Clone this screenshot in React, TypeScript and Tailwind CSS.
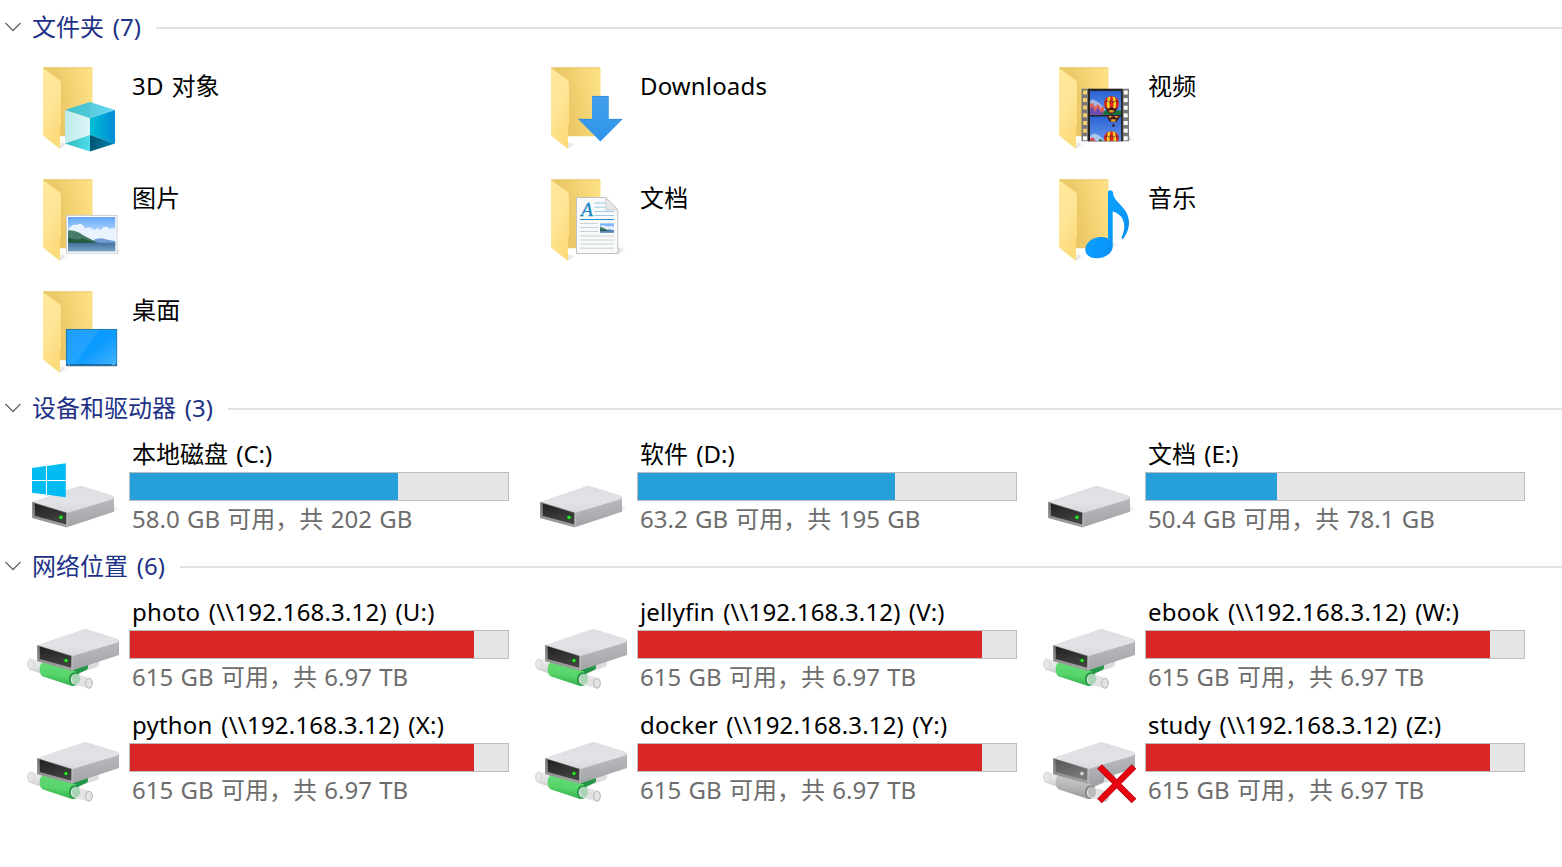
import type { ReactNode } from 'react';

type Drive = { name: string; track: string; info: string; used: number; icon: ReactNode };

function Defs() {
  return (
    <svg className="absolute h-0 w-0" aria-hidden="true">
      <defs>
        <linearGradient id="folderBack" x1="0" y1="0.6" x2="1" y2="0.3">
          <stop offset="0.3" stopColor="#ebc765" />
          <stop offset="1" stopColor="#fde084" />
        </linearGradient>
        <linearGradient id="folderFront" x1="0" y1="0" x2="0.4" y2="1">
          <stop offset="0" stopColor="#ffe89c" />
          <stop offset="0.5" stopColor="#fee598" />
          <stop offset="1" stopColor="#fedb7c" />
        </linearGradient>
        <linearGradient id="shade">
          <stop offset="0" stopColor="#9a9a9a" stopOpacity="0.35" />
          <stop offset="1" stopColor="#bbb" stopOpacity="0" />
        </linearGradient>
        <linearGradient id="cubeTop"><stop stopColor="#45c6ca" /><stop offset="1" stopColor="#6bd5f5" /></linearGradient>
        <linearGradient id="cubeLeft"><stop stopColor="#bdebea" /><stop offset="1" stopColor="#dcf5fa" /></linearGradient>
        <linearGradient id="cubeRight"><stop stopColor="#00bed6" /><stop offset="1" stopColor="#008bd6" /></linearGradient>
        <linearGradient id="cubeFloor"><stop stopColor="#2cb9b7" /><stop offset="1" stopColor="#4fdded" /></linearGradient>
        <linearGradient id="cubeDark"><stop stopColor="#00566f" /><stop offset="1" stopColor="#0082b6" /></linearGradient>
        <linearGradient id="arrow" x2="0" y2="1"><stop stopColor="#42a0ec" /><stop offset="1" stopColor="#2f93e8" /></linearGradient>
        <linearGradient id="sky" x2="0" y2="1"><stop stopColor="#65a5fa" /><stop offset="0.7" stopColor="#e4f3ff" /></linearGradient>
        <linearGradient id="lake" x2="0" y2="1"><stop stopColor="#3e6f9c" /><stop offset="1" stopColor="#7fa9c8" /></linearGradient>
        <linearGradient id="videoSky" x2="0" y2="1"><stop stopColor="#2b62d2" /><stop offset="1" stopColor="#6497ee" /></linearGradient>
        <linearGradient id="note" x2="1" y2="1"><stop stopColor="#0ea4ff" /><stop offset="0.6" stopColor="#0a99fb" /><stop offset="1" stopColor="#0784e3" /></linearGradient>
        <linearGradient id="screen" x2="1" y2="1"><stop stopColor="#0795fc" /><stop offset="0.55" stopColor="#0c9bff" /><stop offset="1" stopColor="#46b4ff" /></linearGradient>
        <linearGradient id="driveSide" x2="0.25" y2="1"><stop offset="0.2" stopColor="#d9dadd" /><stop offset="0.5" stopColor="#b9babd" /><stop offset="1" stopColor="#a5a6a9" /></linearGradient>
        <linearGradient id="driveTop" x2="0" y2="1"><stop stopColor="#dedfe2" /><stop offset="0.6" stopColor="#e2e3e6" /><stop offset="1" stopColor="#d8d9dc" /></linearGradient>
        <linearGradient id="driveSlot" x2="0.3" y2="1"><stop stopColor="#202020" /><stop offset="1" stopColor="#424242" /></linearGradient>
        <linearGradient id="slotOff" x2="0.3" y2="1"><stop stopColor="#565656" /><stop offset="1" stopColor="#7a7a7a" /></linearGradient>
        <linearGradient id="driveRim" x2="0" y2="1"><stop stopColor="#6f6f6f" /><stop offset="1" stopColor="#a9a9a9" /></linearGradient>
        <linearGradient id="pipe" x1="0.6" x2="0.4" y2="1"><stop stopColor="#67dc79" /><stop offset="0.55" stopColor="#56d469" /><stop offset="1" stopColor="#2fa748" /></linearGradient>
        <linearGradient id="pipeOff" x1="0.6" x2="0.4" y2="1"><stop stopColor="#c9c9cb" /><stop offset="0.5" stopColor="#b7b7b9" /><stop offset="1" stopColor="#919193" /></linearGradient>
        <linearGradient id="tube" x1="0.6" x2="0.4" y2="1"><stop stopColor="#eeeeee" /><stop offset="0.6" stopColor="#e0e0e0" /><stop offset="1" stopColor="#c8c8c8" /></linearGradient>
      </defs>
    </svg>
  );
}

function Folder({ children }: { children: ReactNode }) {
  return (
    <svg className="h-[112px] w-[108px] shrink-0" viewBox="21 56 108 112">
      <path d="M60 148.5 68 144.5 61 142Z" fill="url(#shade)" />
      <path d="M43 67.3H92.5V136.2H60Z" fill="url(#folderBack)" />
      <path d="M43 67.8H92.3" stroke="#e8cb76" strokeWidth="0.8" />
      <path d="M43 68 58.5 79.2Q61 81 61 83V124.5L60 127V149L43 135.5Z" fill="url(#folderFront)" />
      {children}
    </svg>
  );
}

function ObjectsIcon() {
  return (
    <Folder>
      <path d="M90 151 121 141 115 139Z" fill="url(#shade)" />
      <path d="M90 102 115 110 90 118.3 65 110Z" fill="url(#cubeTop)" />
      <path d="M90 102V118.3L65 110Z" fill="#35b9c6" opacity="0.25" />
      <path d="M65 110 90 118.3V135L65 143.4Z" fill="url(#cubeLeft)" />
      <path d="M115 110 90 118.3V135L115 143.4Z" fill="url(#cubeRight)" />
      <path d="M65 143.4 90 135V151.4Z" fill="url(#cubeFloor)" />
      <path d="M115 143.4 90 135V151.4Z" fill="url(#cubeDark)" />
    </Folder>
  );
}

function DownloadsIcon() {
  return (
    <Folder>
      <path d="M84 96H100.8V119H114.8L92.4 141.4 70 119H84Z" fill="url(#arrow)" />
      <path d="M84 96.4H100.8M70.5 119.3H84M101 119.3H114" stroke="#2f86d2" strokeWidth="0.7" />
    </Folder>
  );
}

function Balloon({ x, y }: { x: number; y: number }) {
  return (
    <g transform={`translate(${x} ${y}) scale(0.93)`}>
      <path d="M-8 0C-8-10.5 8-10.5 8 0 8 4 4.5 7 3 10H-3C-4.5 7-8 4-8 0Z" fill="#d9281c" />
      <path d="M-3.5-7C-5.5-3-5.5 3-3 9H-1C-2.5 3-2.5-3-1-7.5ZM3.5-7C5.5-3 5.5 3 3 9H1C2.500 3 2.5-3 1-7.5Z" fill="#f3d424" />
      <path d="M-7.5 3-4 5.5 0 4 4 5.5 7.5 3 5 7.500 3 10H-3L-5 7.5Z" fill="#3b1420" />
      <path d="M-3.5 6.5-2 7.5 0 6.500 2 7.5 3.5 6.5 2 9.500H-2Z" fill="#d8a522" />
      <path d="M-7.500-1.500-4-3-2-1 0-3 2-1 4-3 7.500-1.500" stroke="#4a1820" strokeWidth="0.8" fill="none" />
    </g>
  );
}

function VideoIcon() {
  const holes = [0, 1, 2, 3, 4, 5, 6];
  return (
    <Folder>
      <path d="M113 141.3 118 139 113 136Z" fill="url(#shade)" />
      <path
        fillRule="evenodd"
        d="M65.5 88.8H113V141.3H65.5ZM67 90.5V94.5H71V90.5ZM67 98V102H71V98ZM67 105.6V109.6H71V105.6ZM67 113.3V117.3H71V113.3ZM67 121V125H71V121ZM67 128.7V132.7H71V128.7ZM67 136.2V140.2H71V136.2Z"
        fill="#777"
      />
      {holes.map((n) => (
        <rect key={n} x="107.7" y={90.5 + n * 7.63} width="4" height="4" fill="#fff" />
      ))}
      <rect x="72" y="88.8" width="34.7" height="52.5" fill="#252525" />
      <svg x="74" y="91" width="31" height="23.7" viewBox="0 0 31 23.7">
        <rect width="31" height="24" fill="url(#videoSky)" />
        <path d="M0 10Q3 7 6 10 9 11 13 16L16 19H0Z" fill="#a9b6e6" />
        <path d="M0 13 3 12 5 16 8 13 11 17 14 15V24H0Z" fill="#e0655a" />
        <path d="M0 19 2 15 5 21 8 16 11 22 13 19V24H0Z" fill="#6b4cb4" />
        <path d="M15 19.5H31V24H12Z" fill="#137238" />
        <Balloon x={21.5} y={12.6} />
        <path d="M20.300 23.7V22H22.7V23.700Z" fill="#321" />
      </svg>
      <svg x="74" y="116.3" width="31" height="24.7" viewBox="0 0 31 24.7">
        <rect width="31" height="25" fill="url(#videoSky)" />
        <Balloon x={23.3} y={-3.5} />
        <path d="M22.200 8H24.700V10.500H22.200Z" fill="#402525" />
        <path d="M0 20Q3 16 6 18 9 18 14 24V25H0Z" fill="#aec7ee" />
        <path d="M0 22.5 3 21 6 25H0Z" fill="#d94c55" />
        <path d="M8 25 10 22.500 14 25Z" fill="#177b40" />
        <Balloon x={21.5} y={22.3} />
      </svg>
    </Folder>
  );
}

function Landscape() {
  return (
    <>
      <rect width="47" height="34" fill="url(#sky)" />
      <path d="M0 13Q4 6 9 8 13 4 17 11 23 9 26 13 29 9 32 13 37 7 41 12 44 9 47 12V25H0Z" fill="#e9f3ff" />
      <path d="M23 24Q30 19 37 22L47 24V28H20Z" fill="#6d9ad0" />
      <path d="M0 13Q9 13 15 18L31 26V28H0Z" fill="#487d6a" />
      <path d="M0 20Q8 24 14 21 24 24 33 27H0Z" fill="#255a40" />
      <rect y="25.5" width="47" height="9" fill="url(#lake)" />
    </>
  );
}

function PicturesIcon() {
  return (
    <Folder>
      <path d="M117 142 121 138 117 137Z" fill="url(#shade)" />
      <rect x="66.5" y="103.5" width="50.5" height="37.8" fill="#fff" stroke="#cfd1d3" />
      <svg x="68" y="105" width="47.5" height="34.5" viewBox="0 0 47 34" preserveAspectRatio="none"><Landscape /></svg>
    </Folder>
  );
}

function DocumentsIcon() {
  return (
    <Folder>
      <path d="M110 142 119 137.5 110 135Z" fill="url(#shade)" />
      <path d="M68.5 85.5H97.8L109.8 97.8V141.5H68.5Z" fill="#f8f9fa" stroke="#bfc3c5" />
      <path d="M97.8 85.5V97.8H109.8Z" fill="#e6e7e9" stroke="#c0c3c5" strokeWidth="0.8" />
      <path d="M86.5 91H97M86.5 95.2H97M86.5 99.5H106M86.5 103.5H106" stroke="#9ccbe5" />
      <path d="M72 107.5H106" stroke="#278fcf" />
      <path d="M72 111.5H90M72 115.5H90M72 119.5H90M72 124H106M72 128H106M72 132H106M72 136.2H106" stroke="#ccd0d2" />
      <text x="73" y="103.7" fontFamily="Liberation Serif, serif" fontSize="19.5" fontStyle="italic" fill="#1987c7" stroke="#1987c7" strokeWidth="0.3">A</text>
      <svg x="92" y="111.3" width="14" height="9.7" viewBox="0 0 47 34" preserveAspectRatio="none"><Landscape /></svg>
    </Folder>
  );
}

function MusicIcon() {
  return (
    <Folder>
      <path d="M93 137 104 132.5 96 130Z" fill="url(#shade)" />
      <path
        d="M92 80.5C92 77.5 96.5 77.5 97 80.5 97.5 91 113 95 113 110.5 113 117 110.5 122 107.5 126.5 106.5 127.5 105 126.5 105.7 125.2 112 111 106 102 96.7 99.5V134C96.7 142 88 146.3 81 146.3 73.5 146.3 69.3 142.5 69.3 137.5 69.3 129.5 79 123.5 88 125.2 90 125.5 91.2 125.9 92 126.3Z"
        fill="url(#note)"
      />
    </Folder>
  );
}

function DesktopIcon() {
  return (
    <Folder>
      <path d="M66 142H118L115 143H70Z" fill="#ddd" />
      <rect x="66.4" y="105.4" width="50.3" height="36" fill="url(#screen)" />
      <path d="M66.5 105.5H100L75 140H66.5Z" fill="#fff" opacity="0.09" />
      <rect x="66.4" y="105.4" width="50.3" height="36" fill="none" stroke="#1773ad" strokeWidth="0.9" />
      <path d="M66 140.8H117" stroke="#155b8d" strokeWidth="1.3" />
      <path d="M68 140.7H70M112 140.7H115" stroke="#8dcdf4" strokeWidth="0.7" />
    </Folder>
  );
}

function DriveBox({ off = false }: { off?: boolean }) {
  return (
    <>
      <path d="M32.3 502 78 486.5Q80.3 485.7 83 486.5L111.5 495.5Q114 496.3 114 499V511.7L67 527.3Z" fill="url(#driveSide)" />
      <path d="M32.3 502 78 486.5Q80.3 485.7 83 486.5L111.5 495.5Q113.5 496.3 113.5 497.5 113 499 110 500L67 513Z" fill="url(#driveTop)" />
      <path d="M32.3 502 67 512.5V527.3L32.3 517.7Z" fill="url(#driveRim)" />
      <path d="M34.8 503.4 66.3 513V524.5L34.8 515.7Z" fill={off ? 'url(#slotOff)' : 'url(#driveSlot)'} />
      <path d="M32.6 502.2V517.7L67 527" fill="none" stroke="#8b8b8b" strokeWidth="0.7" />
      <path d="M67 513V527" stroke="#d0d0d2" strokeWidth="0.7" />
      <circle cx="61" cy="517.3" r="2.2" fill={off ? '#939393' : '#126a13'} />
      <circle cx="61" cy="517.3" r="1.6" fill={off ? '#dedede' : '#31ef32'} />
    </>
  );
}

function LocalIcon({ system = false }: { system?: boolean }) {
  return (
    <svg className="h-[113px] w-[108px] shrink-0" viewBox="21 426 108 113">
      <path d="M112 512 120 508.5 113 506Z" fill="url(#shade)" />
      <DriveBox />
      {system && (
        <path d="M32 468 45.9 466.1V479.9H32ZM46.9 465.9 65.8 463.3V479.9H46.9ZM32 480.9H45.9V494.6L32 492.8ZM46.9 480.9H65.8V497.2L46.9 494.7Z" fill="#00bcf2" />
      )}
    </svg>
  );
}

function NetworkIcon({ off = false }: { off?: boolean }) {
  return (
    <svg className="h-[113px] w-[108px] shrink-0" viewBox="21 584 108 113">
      <path d="M82 672 96 667.5Q99 666.5 99 663.5V659L80 665Z" fill="#dcdcdc" />
      <path d="M68 672 85 665 88 664V667Q88 669.5 85 670.5L72 677Z" fill={off ? '#a1a1a3' : '#239548'} />
      <path d="M32 658.7 45 662 42 674 30 669.8C26 667 27 659 32 658.7Z" fill="url(#tube)" />
      <ellipse cx="30.8" cy="664" rx="3.2" ry="5" fill="#e7e7e7" stroke="#d0d0d0" strokeWidth="0.8" />
      <path d="M43 662.5 76 671.5 76 684.5Q73 687 69 685L43 676.5C38 674 39 663 43 662.5Z" fill={off ? 'url(#pipeOff)' : 'url(#pipe)'} />
      <ellipse cx="74.5" cy="679" rx="5.6" ry="6.8" fill={off ? '#858587' : '#259a4a'} />
      <path d="M76 674 90 678C94 680 93 688 88 688.3L74 684.5Q70 683 71 678 72 674 76 674Z" fill="#e2e2e2" />
      <ellipse cx="76" cy="679" rx="4" ry="5.2" fill={off ? '#b9b9b9' : '#a9d4b5'} />
      <ellipse cx="89" cy="683.3" rx="3.3" ry="4.8" fill="#e5e5e5" stroke="#b8b8b8" strokeWidth="1.1" />
      <g transform="translate(5 143.2)"><DriveBox off={off} /></g>
      {off && <path d="M83.5 653.5 118 688M118 653.5 83.5 688" stroke="#b70009" strokeWidth="6.5" />}
      {off && <path d="M84 654 117.5 687.5M117.5 654 84 687.5" stroke="#e70410" strokeWidth="5.3" />}
    </svg>
  );
}

function GroupHeader({ title, className }: { title: string; className: string }) {
  return (
    <div className={`flex items-center pl-[5px] text-[#1e3287] ${className}`}>
      <svg className="mr-[11px] mb-[2px] h-[10px] w-[16px]" viewBox="0 0 16 10">
        <path d="M0.5 1 8 8.5 15.5 1" fill="none" stroke="#666" strokeWidth="1.3" />
      </svg>
      <h2 className="mb-[2px] whitespace-nowrap [word-spacing:2.5px]">{title}</h2>
      <div className="ml-[15.5px] h-[2px] flex-1 bg-[#e2e2e2]" />
    </div>
  );
}

function DriveTile({ drive, color }: { drive: Drive; color: string }) {
  return (
    <div className="flex h-[113px]">
      {drive.icon}
      <div className="w-[380px] pt-[11px]">
        <div className={`h-[35px] pl-[3px] leading-[34px] whitespace-nowrap ${drive.track}`}>{drive.name}</div>
        <div className="h-[29px] border border-[#bcbcbc] bg-[#e6e6e6]">
          <div className={`h-full ${color}`} style={{ width: drive.used }} />
        </div>
        <div className="h-[36px] pl-[3px] leading-[36px] whitespace-nowrap text-[#6d6d6d] [word-spacing:1.1px]">{drive.info}</div>
      </div>
    </div>
  );
}

const folders = [
  { name: '3D 对象', icon: <ObjectsIcon /> },
  { name: 'Downloads', icon: <DownloadsIcon /> },
  { name: '视频', icon: <VideoIcon /> },
  { name: '图片', icon: <PicturesIcon /> },
  { name: '文档', icon: <DocumentsIcon /> },
  { name: '音乐', icon: <MusicIcon /> },
  { name: '桌面', icon: <DesktopIcon /> },
];

const drives: Drive[] = [
  { name: '本地磁盘 (C:)', track: '[word-spacing:2px]', info: '58.0 GB 可用，共 202 GB', used: 268, icon: <LocalIcon system /> },
  { name: '软件 (D:)', track: '[word-spacing:2px]', info: '63.2 GB 可用，共 195 GB', used: 257, icon: <LocalIcon /> },
  { name: '文档 (E:)', track: '[word-spacing:2px]', info: '50.4 GB 可用，共 78.1 GB', used: 131, icon: <LocalIcon /> },
];

const shares: Drive[] = [
  { name: 'photo (\\\\192.168.3.12) (U:)', track: 'tracking-[0.18px] [word-spacing:2.2px]', info: '615 GB 可用，共 6.97 TB', used: 344, icon: <NetworkIcon /> },
  { name: 'jellyfin (\\\\192.168.3.12) (V:)', track: 'tracking-[0.14px] [word-spacing:2px]', info: '615 GB 可用，共 6.97 TB', used: 344, icon: <NetworkIcon /> },
  { name: 'ebook (\\\\192.168.3.12) (W:)', track: 'tracking-[0.2px] [word-spacing:2.4px]', info: '615 GB 可用，共 6.97 TB', used: 344, icon: <NetworkIcon /> },
  { name: 'python (\\\\192.168.3.12) (X:)', track: 'tracking-[0.2px] [word-spacing:2.3px]', info: '615 GB 可用，共 6.97 TB', used: 344, icon: <NetworkIcon /> },
  { name: 'docker (\\\\192.168.3.12) (Y:)', track: 'tracking-[0.15px] [word-spacing:2px]', info: '615 GB 可用，共 6.97 TB', used: 344, icon: <NetworkIcon /> },
  { name: 'study (\\\\192.168.3.12) (Z:)', track: 'tracking-[0.18px] [word-spacing:2.2px]', info: '615 GB 可用，共 6.97 TB', used: 344, icon: <NetworkIcon off /> },
];

export default function App() {
  return (
    <main className="h-[867px] w-[1562px] overflow-hidden bg-white font-['Noto_Sans','Noto_Sans_CJK_SC',sans-serif] text-[24px] text-black">
      <Defs />

      {/* Folders */}
      <GroupHeader title="文件夹 (7)" className="h-[56px]" />
      <section className="grid grid-cols-[508px_508px_508px] pl-[21px]">
        {folders.map((folder) => (
          <div key={folder.name} className="flex h-[112px]">
            {folder.icon}
            <div className="pt-[13px] pl-[3px] leading-[34px] tracking-[0.15px] whitespace-nowrap [word-spacing:1.5px]">{folder.name}</div>
          </div>
        ))}
      </section>

      {/* Local drives */}
      <GroupHeader title="设备和驱动器 (3)" className="h-[34px]" />
      <section className="mb-[11px] grid grid-cols-[508px_508px_508px] pl-[21px]">
        {drives.map((drive) => (
          <DriveTile key={drive.name} drive={drive} color="bg-[#26a0da]" />
        ))}
      </section>

      {/* Network shares */}
      <GroupHeader title="网络位置 (6)" className="h-[34px]" />
      <section className="grid grid-cols-[508px_508px_508px] pl-[21px]">
        {shares.map((drive) => (
          <DriveTile key={drive.name} drive={drive} color="bg-[#da2626]" />
        ))}
      </section>
    </main>
  );
}
